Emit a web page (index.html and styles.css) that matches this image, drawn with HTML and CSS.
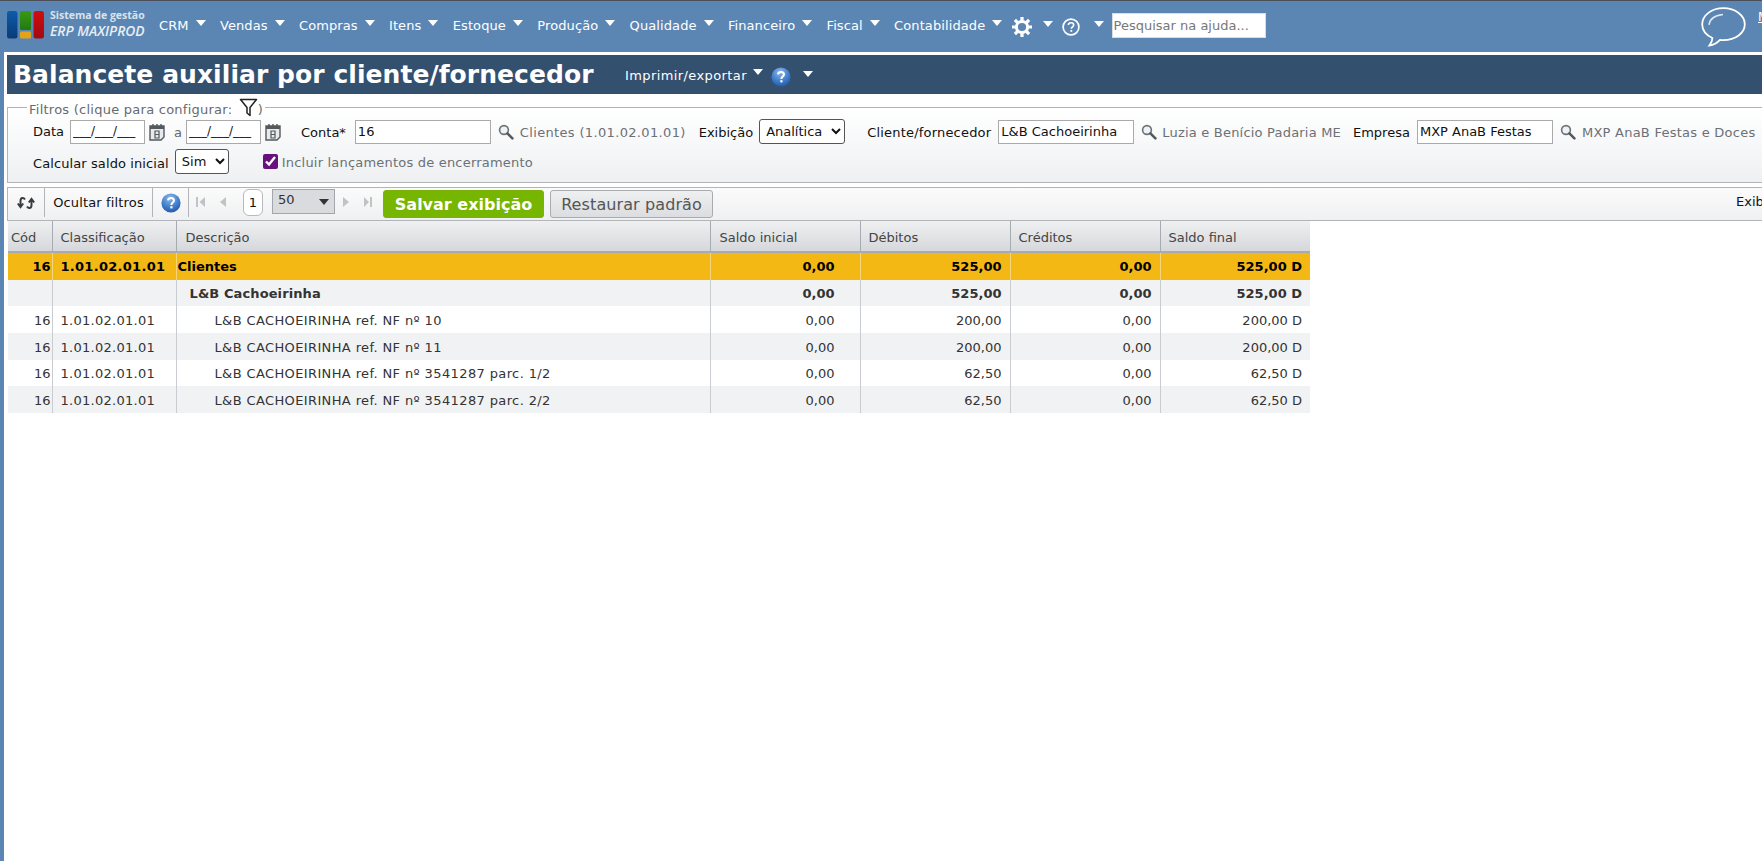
FILE: index.html
```html
<!DOCTYPE html>
<html lang="pt-BR">
<head>
<meta charset="utf-8">
<title>Balancete auxiliar por cliente/fornecedor</title>
<link rel="stylesheet" href="styles.css">
</head>
<body>
<svg class="defs" width="0" height="0" aria-hidden="true">
  <symbol id="lens" viewBox="0 0 16 16"><circle cx="6" cy="6" r="4.4" fill="#eef2f6" stroke="#6d7278" stroke-width="1.6"/><path d="M9.4 9.4 14.4 14.4" stroke="#55595e" stroke-width="2.6" stroke-linecap="round"/></symbol>
  <symbol id="cal" viewBox="0 0 18 18"><path d="M2 3h14v11l-3 3H2z" fill="#e9eaeb" stroke="#55585c" stroke-width="1.4"/><path d="M2 3h14v3H2z" fill="#55585c"/><path d="M5 1v3M9 1v3M13 1v3" stroke="#55585c" stroke-width="1.4"/><path d="M7 8h4v7H7zM7 11.5h4" fill="none" stroke="#55585c" stroke-width="1.2"/></symbol>
  <symbol id="qblue" viewBox="0 0 20 20"><defs><radialGradient id="qg" cx=".45" cy=".25" r=".85"><stop offset="0" stop-color="#8db8ec"/><stop offset=".6" stop-color="#3a78c8"/><stop offset="1" stop-color="#1c4f9c"/></radialGradient></defs><circle cx="10" cy="10" r="9.6" fill="url(#qg)"/><path d="M7 7.4C7.2 5.7 8.4 5 10 5c1.8 0 3 1 3 2.5 0 2-2.6 2.2-2.6 4.4" fill="none" stroke="#fff" stroke-width="2"/><rect x="9.3" y="13.2" width="2.2" height="2.2" fill="#fff"/></symbol>
</svg>

<header class="topbar">
  <div class="logo">
    <svg class="logo-mark" width="37" height="28" viewBox="0 0 37 28" aria-hidden="true">
      <defs>
        <linearGradient id="lb" x1="0" x2="0" y1="0" y2="1"><stop offset="0" stop-color="#0c5cab"/><stop offset="1" stop-color="#0a3a78"/></linearGradient>
        <linearGradient id="lg" x1="0" x2="0" y1="0" y2="1"><stop offset="0" stop-color="#3a9a12"/><stop offset="1" stop-color="#1f7a14"/></linearGradient>
        <linearGradient id="lr" x1="0" x2="0" y1="0" y2="1"><stop offset="0" stop-color="#d20c0c"/><stop offset="1" stop-color="#a00a14"/></linearGradient>
      </defs>
      <rect x="0" y="0" width="10.5" height="27.5" rx="2.5" fill="url(#lb)"/>
      <rect x="13" y="0" width="11" height="19" rx="1.5" fill="url(#lg)"/>
      <rect x="13" y="20.5" width="11" height="7" rx="1.5" fill="#e0a31a"/>
      <rect x="26.5" y="0" width="10.5" height="27.5" rx="2.5" fill="url(#lr)"/>
    </svg>
    <div class="logo-text">
      <span class="logo-top">Sistema de gestão</span>
      <span class="logo-bottom">ERP MAXIPROD</span>
    </div>
  </div>
  <nav class="menu">
    <span class="menu-item">CRM<i class="caret"></i></span>
    <span class="menu-item">Vendas<i class="caret"></i></span>
    <span class="menu-item">Compras<i class="caret"></i></span>
    <span class="menu-item">Itens<i class="caret"></i></span>
    <span class="menu-item">Estoque<i class="caret"></i></span>
    <span class="menu-item">Produção<i class="caret"></i></span>
    <span class="menu-item">Qualidade<i class="caret"></i></span>
    <span class="menu-item">Financeiro<i class="caret"></i></span>
    <span class="menu-item">Fiscal<i class="caret"></i></span>
    <span class="menu-item">Contabilidade<i class="caret"></i></span>
    <span class="menu-icon">
      <svg width="20" height="20" viewBox="0 0 20 20" aria-hidden="true"><circle cx="10" cy="10" r="5.6" fill="none" stroke="#fff" stroke-width="3"/><path d="M10 0v4M10 16v4M0 10h4M16 10h4M2.9 2.9l2.9 2.9M14.2 14.2l2.9 2.9M17.1 2.9l-2.9 2.9M5.8 14.2l-2.9 2.9" stroke="#fff" stroke-width="3.2"/></svg>
      <i class="caret caret-gear"></i>
    </span>
    <span class="menu-icon menu-icon-help">
      <svg width="18" height="18" viewBox="0 0 18 18" aria-hidden="true"><circle cx="9" cy="9" r="7.9" fill="none" stroke="#fff" stroke-width="1.7"/><path d="M6.3 7C6.5 5.4 7.6 4.7 9 4.7c1.6 0 2.7.9 2.7 2.2 0 1.8-2.4 2-2.4 3.9" fill="none" stroke="#fff" stroke-width="1.6"/><rect x="8.4" y="12" width="1.8" height="1.8" fill="#fff"/></svg>
      <i class="caret caret-help"></i>
    </span>
    <input class="menu-search" type="text" placeholder="Pesquisar na ajuda...">
  </nav>
  <div class="top-right">
    <svg class="chat" width="45" height="40" viewBox="0 0 45 40" aria-hidden="true"><path d="M22.5 1.2C10.600 1.200 1.200 8.300 1.200 17.300c0 6 4.200 11 10.200 13.700 0 2.800-1 5-3 7.500 4.200-.4 8-2.800 10.600-5.600 1.200.2 2.400.2 3.500.2 11.900 0 21.300-7 21.300-15.800S34.400 1.200 22.500 1.200z" fill="none" stroke="#fff" stroke-width="1.800"/><path d="M8 18C8.500 12 13 8.500 22 7.500" fill="none" stroke="#dfe8f2" stroke-width="1.300"/></svg>
    <a class="top-link" href="#">Meu usuário</a>
  </div>
</header>

<div class="page">
  <div class="titlebar">
    <h1 class="title">Balancete auxiliar por cliente/fornecedor</h1>
    <span class="title-action">Imprimir/exportar<i class="caret caret-print"></i></span>
    <svg class="title-help" width="20" height="20" aria-hidden="true"><use href="#qblue"/></svg>
    <i class="caret caret-title"></i>
  </div>

  <fieldset class="filters">
    <legend class="filters-legend">Filtros (clique para configurar:
      <svg class="funnel" width="19" height="19" viewBox="0 0 19 19" aria-hidden="true"><path d="M1.500 1.500h16L11 9.500v8l-3-2.500V9.500z" fill="none" stroke="#222" stroke-width="1.500" stroke-linejoin="round"/></svg>)
    </legend>
    <div class="filter-row">
      <label class="f-label f-data">Data</label>
      <input class="f-input f-date" type="text" value="___/___/___">
      <svg class="f-cal" width="18" height="18" aria-hidden="true"><use href="#cal"/></svg>
      <span class="f-a">a</span>
      <input class="f-input f-date" type="text" value="___/___/___">
      <svg class="f-cal" width="18" height="18" aria-hidden="true"><use href="#cal"/></svg>
      <label class="f-label f-conta">Conta*</label>
      <input class="f-input f-wide" type="text" value="16">
      <svg class="f-lens" width="16" height="16" aria-hidden="true"><use href="#lens"/></svg>
      <span class="f-hint f-hint-account">Clientes (1.01.02.01.01)</span>
      <label class="f-label f-exib">Exibição</label>
      <select class="f-select f-select-exib"><option>Analítica</option></select>
      <label class="f-label f-cli">Cliente/fornecedor</label>
      <input class="f-input f-wide" type="text" value="L&amp;B Cachoeirinha">
      <svg class="f-lens" width="16" height="16" aria-hidden="true"><use href="#lens"/></svg>
      <span class="f-hint f-hint-client">Luzia e Benício Padaria ME</span>
      <label class="f-label f-emp">Empresa</label>
      <input class="f-input f-wide" type="text" value="MXP AnaB Festas">
      <svg class="f-lens" width="16" height="16" aria-hidden="true"><use href="#lens"/></svg>
      <span class="f-hint">MXP AnaB Festas e Doces</span>
    </div>
    <div class="filter-row filter-row-2">
      <label class="f-label f-calc">Calcular saldo inicial</label>
      <select class="f-select f-select-sim"><option>Sim</option></select>
      <input class="f-check" type="checkbox" checked>
      <span class="f-check-label">Incluir lançamentos de encerramento</span>
    </div>
  </fieldset>

  <div class="toolbar">
    <button class="tb-cell tb-refresh" type="button" aria-label="Atualizar">
      <svg width="18" height="14" viewBox="0 0 18 14" aria-hidden="true"><path d="M8 3.500C6.500 1 3.500 1.500 3.500 5v6M.8 7.500 3.500 11l2.700-3.500M10 10.500c1.500 2.500 4.500 2 4.500-1.500V3M11.800 6.500 14.500 3l2.700 3.500" fill="none" stroke="#3a3d40" stroke-width="2"/></svg>
    </button>
    <button class="tb-cell tb-text" type="button">Ocultar filtros</button>
    <span class="tb-cell tb-help"><svg width="20" height="20" aria-hidden="true"><use href="#qblue"/></svg></span>
    <span class="pager">
      <svg class="pg-first" width="12" height="12" viewBox="0 0 12 12" aria-hidden="true"><path d="M2 1h2v10H2zM11 1v10L5.500 6z" fill="#c0c3c6"/></svg>
      <svg class="pg-prev" width="9" height="12" viewBox="0 0 9 12" aria-hidden="true"><path d="M8 1v10L2 6z" fill="#c0c3c6"/></svg>
      <span class="pg-page">1</span>
      <span class="pg-size">50<i class="pg-size-arrow"></i></span>
      <svg class="pg-next" width="7" height="12" viewBox="0 0 7 12" aria-hidden="true"><path d="M0 1v10L6 6z" fill="#c0c3c6"/></svg>
      <svg class="pg-last" width="9" height="12" viewBox="0 0 9 12" aria-hidden="true"><path d="M0 1v10L5 6zM6 1h2v10H6z" fill="#c0c3c6"/></svg>
    </span>
    <button class="btn-save" type="button">Salvar exibição</button>
    <button class="btn-reset" type="button">Restaurar padrão</button>
    <span class="tb-right">Exibindo 6 registros</span>
  </div>

  <table class="grid">
    <colgroup>
      <col class="c-cod"><col class="c-cla"><col class="c-des"><col class="c-num"><col class="c-num"><col class="c-num"><col class="c-num">
    </colgroup>
    <thead>
      <tr><th>Cód</th><th>Classificação</th><th>Descrição</th><th>Saldo inicial</th><th>Débitos</th><th>Créditos</th><th>Saldo final</th></tr>
    </thead>
    <tbody>
      <tr class="r-account"><td class="n">16</td><td>1.01.02.01.01</td><td class="d0">Clientes</td><td class="n">0,00</td><td class="n">525,00</td><td class="n">0,00</td><td class="n">525,00 D</td></tr>
      <tr class="r-group"><td></td><td></td><td class="d1">L&amp;B Cachoeirinha</td><td class="n">0,00</td><td class="n">525,00</td><td class="n">0,00</td><td class="n">525,00 D</td></tr>
      <tr class="r-line"><td class="n">16</td><td>1.01.02.01.01</td><td class="d2">L&amp;B CACHOEIRINHA ref. NF nº 10</td><td class="n">0,00</td><td class="n">200,00</td><td class="n">0,00</td><td class="n">200,00 D</td></tr>
      <tr class="r-line r-alt"><td class="n">16</td><td>1.01.02.01.01</td><td class="d2">L&amp;B CACHOEIRINHA ref. NF nº 11</td><td class="n">0,00</td><td class="n">200,00</td><td class="n">0,00</td><td class="n">200,00 D</td></tr>
      <tr class="r-line r-short"><td class="n">16</td><td>1.01.02.01.01</td><td class="d2">L&amp;B CACHOEIRINHA ref. NF nº 3541287 parc. 1/2</td><td class="n">0,00</td><td class="n">62,50</td><td class="n">0,00</td><td class="n">62,50 D</td></tr>
      <tr class="r-line r-alt"><td class="n">16</td><td>1.01.02.01.01</td><td class="d2">L&amp;B CACHOEIRINHA ref. NF nº 3541287 parc. 2/2</td><td class="n">0,00</td><td class="n">62,50</td><td class="n">0,00</td><td class="n">62,50 D</td></tr>
    </tbody>
  </table>
</div>
</body>
</html>
```

FILE: styles.css
```css
* { box-sizing: border-box; }
html, body { margin: 0; height: 100%; overflow: hidden; background: #fff; }
body { font: 13px "DejaVu Sans", Verdana, sans-serif; color: #111; width: 1762px; }
.defs { position: absolute; }

.topbar { display: flex; height: 52px; background: #5b86b3; border-top: 1px solid #4b4f57; color: #fff; overflow: hidden; }
.logo { display: flex; flex: none; width: 159px; padding: 10px 0 0 7px; }
.logo-text { display: flex; flex-direction: column; margin: -2px 0 0 6px; }
.logo-top { font: bold 10.500px "Open Sans", sans-serif; color: #d8e2ec; line-height: 13px; white-space: nowrap; }
.logo-bottom { font: italic 600 13.800px "Open Sans", sans-serif; color: #e6edf5; line-height: 17px; white-space: nowrap; }
.menu { display: flex; flex: none; align-items: flex-start; padding-top: 17px; }
.menu-item { display: flex; flex: none; white-space: nowrap; line-height: 16px; letter-spacing: .1px; margin-right: 14.300px; }
.caret { display: block; flex: none; width: 0; height: 0; border-left: 5px solid transparent; border-right: 5px solid transparent; border-top: 6px solid #fff; margin: 2px 0 0 7px; }
.menu-icon { display: flex; flex: none; margin: -1px 0 0 -5px; }
.caret-gear { margin: 4px 0 0 11px; }
.menu-icon-help { margin: 0 0 0 9px; }
.caret-help { margin: 3px 8px 0 14px; }
.menu-search { flex: none; width: 154px; height: 25px; margin-top: -5px; border: 1px solid #d8dde3; padding: 0 1px; font: 13px "DejaVu Sans", sans-serif; background: #fff; }
.menu-search::placeholder { color: #777; opacity: 1; }
.top-right { margin-left: auto; display: flex; flex: none; padding: 6px 0 0 0; width: 61px; }
.chat { flex: none; }
.top-link { color: #fff; font-size: 12px; margin: 3px 0 0 12px; white-space: nowrap; }

.page { width: 1762px; height: 809px; padding: 3px 0 0 3px; border-left: 4px solid #5b86b3; overflow: hidden; }
.titlebar { display: flex; align-items: center; height: 39px; background: #34506f; color: #fff; }
.title { flex: none; margin: 0 0 0 6px; font: bold 25px "DejaVu Sans", sans-serif; letter-spacing: .06px; width: 612px; white-space: nowrap; }
.title-action { display: flex; white-space: nowrap; letter-spacing: .4px; margin-top: 2px; }
.caret-print { margin: 1px 0 0 6px; }
.title-help { margin: 4px 0 0 8px; }
.caret-title { margin: -2px 0 0 12px; }

.filters { margin: 3px 0 0; padding: 0 0 0 25px; height: 86px; border: 1px solid #b2b4b8; border-right: 0; background: linear-gradient(#fff, #eef0f2); min-width: 0; }
.filters-legend { padding: 1px 2px 0; margin-left: -6px; height: 20px; line-height: 20px; color: #666b70; font-size: 13px; letter-spacing: .25px; white-space: nowrap; }
.funnel { vertical-align: -3px; margin-left: 2px; }
.filter-row { display: flex; align-items: center; height: 25px; margin-top: 2px; }
.filter-row-2 { margin-top: 5px; }
.f-label, .f-a, .f-hint { white-space: nowrap; padding-top: 2px; }
.f-input { height: 24px; width: 136px; border: 1px solid #aaa; padding: 0 2px 1px; font: 13px "DejaVu Sans", sans-serif; color: #111; background: #fff; flex: none; }
.f-input.f-date { width: 75px; font-size: 12px; }
.f-cal { margin-left: 3px; flex: none; }
.f-a { color: #666; margin: 0 4px 0 8px; }
.f-label.f-data { margin-right: 6px; padding-top: 0; }
.f-label.f-calc { margin-right: 6px; padding-top: 4px; letter-spacing: .1px; }
.f-conta { margin: 0 9px 0 19px; }
.f-lens { margin-left: 7px; flex: none; }
.f-hint { color: #6c7176; margin-left: 6px; letter-spacing: .25px; }
.f-hint-account { letter-spacing: .34px; }
.f-hint-client { margin-left: 5px; letter-spacing: .2px; }
.f-exib { margin: 0 6px 0 13px; }
.f-select { height: 25px; font: 13px "DejaVu Sans", sans-serif; border: 1px solid #555; border-radius: 3px; background: #fff; color: #111; padding: 0 2px; flex: none; }
.f-select-exib { width: 86px; }
.f-cli { margin: 0 7px 0 22px; letter-spacing: .2px; }
.f-emp { margin: 0 7px 0 12px; }
.f-select-sim { width: 54px; }
.f-check { width: 15px; height: 15px; margin: 0 4px 0 34px; accent-color: #67127c; flex: none; }
.f-check-label { color: #6c7176; letter-spacing: .2px; white-space: nowrap; padding-top: 2px; }

.toolbar { display: flex; align-items: flex-start; height: 34px; margin-top: 4px; border: 1px solid #b2b4b8; border-right: 0; background: linear-gradient(#fbfbfb, #eff0f2); overflow: hidden; }
.toolbar > * { flex: none; }
.tb-cell { display: flex; align-items: center; justify-content: center; height: 29px; border: 0; border-right: 1px solid #b2b4b8; background: none; padding: 0; font: 13px "DejaVu Sans", sans-serif; letter-spacing: .15px; color: #111; }
.tb-refresh { width: 37px; }
.tb-text { width: 108px; }
.tb-help { width: 36px; }
.pager { display: flex; align-items: center; height: 28px; margin-left: 5px; }
.pager > * { flex: none; }
.pg-prev { margin-left: 12px; }
.pg-page { width: 20px; height: 27px; margin-left: 16px; border: 1px solid #b7b9bc; border-radius: 6px; background: #fff; text-align: center; line-height: 25px; }
.pg-size { display: flex; align-items: center; justify-content: space-between; width: 63px; height: 25px; margin: -2px 0 0 9px; padding: 0 5px 3px 5px; border: 1px solid #a3a6ab; background: #d9dbde; color: #333; }
.pg-size-arrow { width: 0; height: 0; border-left: 5px solid transparent; border-right: 5px solid transparent; border-top: 6px solid #333; margin-top: 4px; }
.pg-next { margin-left: 8px; }
.pg-last { margin-left: 14px; }
.btn-save { width: 161px; height: 28px; margin: 2px 0 0 10px; padding: 0; border: 1px solid #7cb30a; border-radius: 3px; background: #76b500; color: #fff; font: bold 16px "DejaVu Sans", sans-serif; white-space: nowrap; }
.btn-reset { width: 163px; height: 28px; margin: 2px 0 0 6px; padding: 0; border: 1px solid #a9abaf; border-radius: 3px; background: linear-gradient(#eff0f1, #dcdde0); color: #555; font: 16px "DejaVu Sans", sans-serif; letter-spacing: .1px; white-space: nowrap; }
.tb-right { margin: 6px 0 0 1023px; white-space: nowrap; }

.grid { border-collapse: collapse; table-layout: fixed; width: 1302px; margin-left: 1px; color: #333; }
.c-cod { width: 44px; }
.c-cla { width: 124px; }
.c-des { width: 534px; }
.c-num { width: 150px; }
.grid th { height: 31px; padding: 2px 8px 0; text-align: left; font-weight: normal; color: #444; background: linear-gradient(#eef0f1, #d5d7db); border-right: 1px solid #a6aab1; border-bottom: 2px solid #a6aab1; white-space: nowrap; }
.grid th:first-child { padding: 2px 3px 0; }
.grid th:nth-child(3), .grid th:nth-child(4) { padding-left: 9px; }
.grid th:last-child { border-right: 0; }
.grid td { height: 27px; padding: 0 8px; border-right: 1px solid #c9cdd2; white-space: nowrap; }
.grid td:first-child { padding: 0 1px 0 0; }
.grid td:nth-child(2) { letter-spacing: .28px; }
.grid td:nth-child(4) { padding-right: 25px; }
.grid td:last-child { border-right: 0; }
.grid td.n { text-align: right; }
.grid .r-line td { padding-top: 1px; }
.r-account td { height: 28px; background: #f4b814; font-weight: bold; color: #000; border-right-color: #f7d679; }
.r-group td { height: 26px; background: #f1f2f4; font-weight: bold; }
.r-short td { height: 26px; }
.r-alt td { background: #f1f2f4; }
.grid td.d0 { padding-left: 1px; }
.grid td.d1 { padding-left: 13px; letter-spacing: .1px; }
.grid td.d2 { padding-left: 38px; letter-spacing: .38px; }
```
